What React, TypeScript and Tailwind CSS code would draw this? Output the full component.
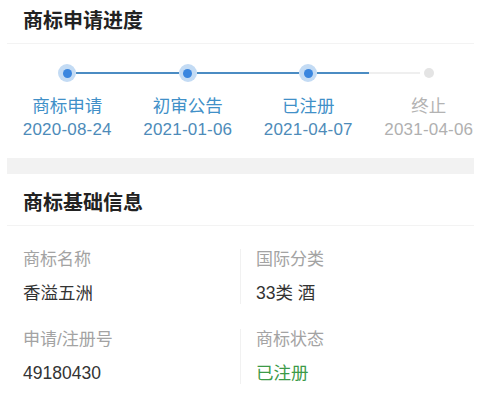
import React from "react";

const font = { fontFamily: '"Liberation Sans", "Noto Sans CJK SC", sans-serif' };

type Step = { name: string; date: string; done: boolean; left: "none" | "blue" | "gray"; right: "none" | "blue" | "gray" };

const steps: Step[] = [
  { name: "商标申请", date: "2020-08-24", done: true, left: "none", right: "blue" },
  { name: "初审公告", date: "2021-01-06", done: true, left: "blue", right: "blue" },
  { name: "已注册", date: "2021-04-07", done: true, left: "blue", right: "blue" },
  { name: "终止", date: "2031-04-06", done: false, left: "gray", right: "none" },
];

function Seg({ kind }: { kind: "none" | "blue" | "gray" }) {
  if (kind === "none") return <div className="flex-1" />;
  return <div className={kind === "blue" ? "flex-1 h-[2px] bg-[#4b8cc3]" : "flex-1 h-[2px] bg-[#efefef]"} />;
}

function Cell({ label, value, valueClass, right }: { label: string; value: string; valueClass?: string; right?: boolean }) {
  return (
    <div className={right ? "flex-1 border-l border-[#f1f1f1] pl-[15px]" : "w-[233px] pl-[16px]"}>
      <div className="text-[17px] leading-[22px] text-[#a3a3a3]">{label}</div>
      <div className={"mt-[11px] text-[17.5px] leading-[22px] " + (valueClass ?? "text-[#333333]")}>{value}</div>
    </div>
  );
}

export default function App() {
  return (
    <div className="w-[500px] h-[403px] bg-white overflow-hidden" style={font}>
      <div className="ml-[7px] w-[467px]">
        <div className="h-[44px] border-b border-[#f3f3f3] pl-[16px] pt-[9px]">
          <div className="text-[20px] leading-[24px] font-bold text-[#222222]">商标申请进度</div>
        </div>
        <div className="h-[114px] pt-[20px]">
          <div className="flex">
            {steps.map((s) => (
              <div key={s.name} className="w-[120.5px] shrink-0 flex flex-col items-center">
                <div className="w-full h-[18px] flex items-center">
                  <Seg kind={s.left} />
                  {s.done ? (
                    <div className="w-[18px] h-[18px] rounded-full bg-[#c3dbf4] flex items-center justify-center">
                      <div className="w-[9px] h-[9px] rounded-full bg-[#3a86df]" />
                    </div>
                  ) : (
                    <div className="w-[18px] h-[18px] flex items-center justify-center">
                      <div className="w-[10px] h-[10px] rounded-full bg-[#e4e4e4]" />
                    </div>
                  )}
                  <Seg kind={s.right} />
                </div>
                <div className={"mt-[13px] text-[17.5px] leading-[22px] whitespace-nowrap " + (s.done ? "text-[#4190c8]" : "text-[#b3b3b3]")}>{s.name}</div>
                <div className={"mt-[3px] text-[17px] leading-[20px] tracking-[0.2px] whitespace-nowrap " + (s.done ? "text-[#4d8bb9]" : "text-[#b0b0b0]")}>{s.date}</div>
              </div>
            ))}
          </div>
        </div>
        <div className="h-[16px] bg-[#f2f2f2]" />
        <div className="h-[52px] border-b border-[#f3f3f3] pl-[16px] pt-[17px]">
          <div className="text-[20px] leading-[24px] font-bold text-[#222222]">商标基础信息</div>
        </div>
        <div className="pt-[23px]">
          <div className="flex">
            <Cell label="商标名称" value="香溢五洲" />
            <Cell label="国际分类" value="33类 酒" right />
          </div>
          <div className="flex mt-[25px]">
            <Cell label="申请/注册号" value="49180430" />
            <Cell label="商标状态" value="已注册" valueClass="text-[#3c9a48]" right />
          </div>
        </div>
      </div>
    </div>
  );
}
